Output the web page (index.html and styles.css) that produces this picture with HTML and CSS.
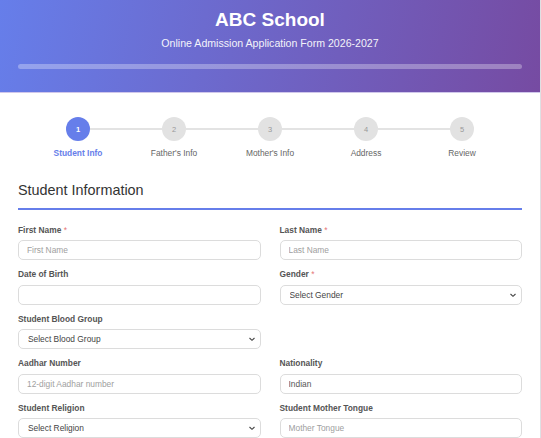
FILE: index.html
```html
<!DOCTYPE html>
<html lang="en">
<head>
<meta charset="utf-8">
<title>ABC School - Online Admission</title>
<link rel="stylesheet" href="styles.css">
</head>
<body>
<div class="page">
  <header class="header">
    <h1 class="title">ABC School</h1>
    <p class="subtitle">Online Admission Application Form 2026-2027</p>
    <div class="progress"><div class="progress-fill"></div></div>
  </header>
  <main class="content">
    <ol class="stepper">
      <li class="step active"><span class="dot">1</span><span class="step-label">Student Info</span></li>
      <li class="step"><span class="dot">2</span><span class="step-label">Father's Info</span></li>
      <li class="step"><span class="dot">3</span><span class="step-label">Mother's Info</span></li>
      <li class="step"><span class="dot">4</span><span class="step-label">Address</span></li>
      <li class="step"><span class="dot">5</span><span class="step-label">Review</span></li>
    </ol>
    <h2 class="section-title">Student Information</h2>
    <form class="grid">
      <div class="group">
        <label class="label">First Name <span class="req">*</span></label>
        <input class="field" type="text" placeholder="First Name">
      </div>
      <div class="group">
        <label class="label">Last Name <span class="req">*</span></label>
        <input class="field" type="text" placeholder="Last Name">
      </div>
      <div class="group">
        <label class="label">Date of Birth</label>
        <input class="field" type="text">
      </div>
      <div class="group">
        <label class="label">Gender <span class="req">*</span></label>
        <select class="field select"><option>Select Gender</option></select>
      </div>
      <div class="group">
        <label class="label">Student Blood Group</label>
        <select class="field select"><option>Select Blood Group</option></select>
      </div>
      <div class="group"></div>
      <div class="group">
        <label class="label">Aadhar Number</label>
        <input class="field" type="text" placeholder="12-digit Aadhar number">
      </div>
      <div class="group">
        <label class="label">Nationality</label>
        <input class="field" type="text" value="Indian">
      </div>
      <div class="group">
        <label class="label">Student Religion</label>
        <select class="field select"><option>Select Religion</option></select>
      </div>
      <div class="group">
        <label class="label">Student Mother Tongue</label>
        <input class="field" type="text" placeholder="Mother Tongue">
      </div>
    </form>
  </main>
</div>
</body>
</html>
```
FILE: styles.css
```css
* { box-sizing: border-box; }
html, body { margin: 0; padding: 0; }
body {
  background: #eceef2;
  font-family: "Liberation Sans", Arial, sans-serif;
  color: #333;
}
.page {
  width: 540px;
  background: #fff;
  min-height: 438px;
  box-shadow: 1px 0 1px rgba(0,0,0,0.06);
}
.header {
  background: linear-gradient(100deg, #667eea 0%, #764ba2 100%);
  color: #fff;
  text-align: center;
  padding: 9px 18px 23px;
  box-shadow: 0 1px 0 rgba(150,130,210,0.45);
}
.title {
  margin: 0;
  font-size: 19px;
  line-height: 22px;
  font-weight: 700;
}
.subtitle {
  margin: 6px 0 0;
  font-size: 10.6px;
  line-height: 13px;
  opacity: 0.92;
}
.progress {
  margin-top: 14px;
  height: 5px;
  border-radius: 3px;
  background: rgba(255,255,255,0.3);
}
.progress-fill { width: 0; height: 100%; }
.content {
  padding: 25px 18px 20px;
}
.stepper {
  list-style: none;
  margin: 0 0 23px;
  padding: 0 12px;
  display: flex;
}
.step {
  flex: 1;
  display: flex;
  flex-direction: column;
  align-items: center;
  position: relative;
}
.step:not(:last-child)::after {
  content: "";
  position: absolute;
  top: 11px;
  left: calc(50% + 12px);
  right: calc(-50% + 12px);
  height: 2px;
  background: #e3e3e3;
}
.dot {
  width: 24px;
  height: 24px;
  border-radius: 50%;
  background: #e2e2e2;
  color: #999;
  font-size: 7.5px;
  display: flex;
  align-items: center;
  justify-content: center;
}
.step-label {
  margin-top: 6.5px;
  font-size: 8.4px;
  line-height: 11px;
  color: #666;
}
.step.active .dot {
  background: #667eea;
  color: #fff;
  font-weight: 700;
}
.step.active .step-label {
  color: #667eea;
  font-weight: 700;
}
.section-title {
  margin: 0 0 15px;
  font-size: 14.4px;
  line-height: 17px;
  font-weight: 400;
  color: #333;
  padding-bottom: 9px;
  border-bottom: 2px solid #667eea;
}
.grid {
  display: grid;
  grid-template-columns: 1fr 1fr;
  column-gap: 19px;
}
.group {
  margin-bottom: 9px;
  min-height: 35.5px;
}
.label {
  display: block;
  font-size: 8.4px;
  line-height: 11px;
  font-weight: 700;
  color: #555;
  margin-bottom: 4.5px;
}
.req { color: #e57373; font-weight: 400; }
.field {
  display: block;
  width: 100%;
  height: 20px;
  border: 1px solid #dcdcdc;
  border-radius: 5px;
  background: #fff;
  padding: 0 8px;
  font-family: "Liberation Sans", Arial, sans-serif;
  font-size: 8.4px;
  color: #555;
  outline: none;
}
.field::placeholder { color: #a0a0a0; }
.select {
  -webkit-appearance: none;
  appearance: none;
  color: #444;
  padding-left: 9px;
  background-image: url("data:image/svg+xml,%3Csvg xmlns='http://www.w3.org/2000/svg' width='8' height='6' viewBox='0 0 8 6'%3E%3Cpath d='M1.5 2 L4 4.3 L6.5 2' fill='none' stroke='%23444' stroke-width='1.1'/%3E%3C/svg%3E");
  background-repeat: no-repeat;
  background-position: right 4px center;
  background-size: 8px 6px;
}
```
